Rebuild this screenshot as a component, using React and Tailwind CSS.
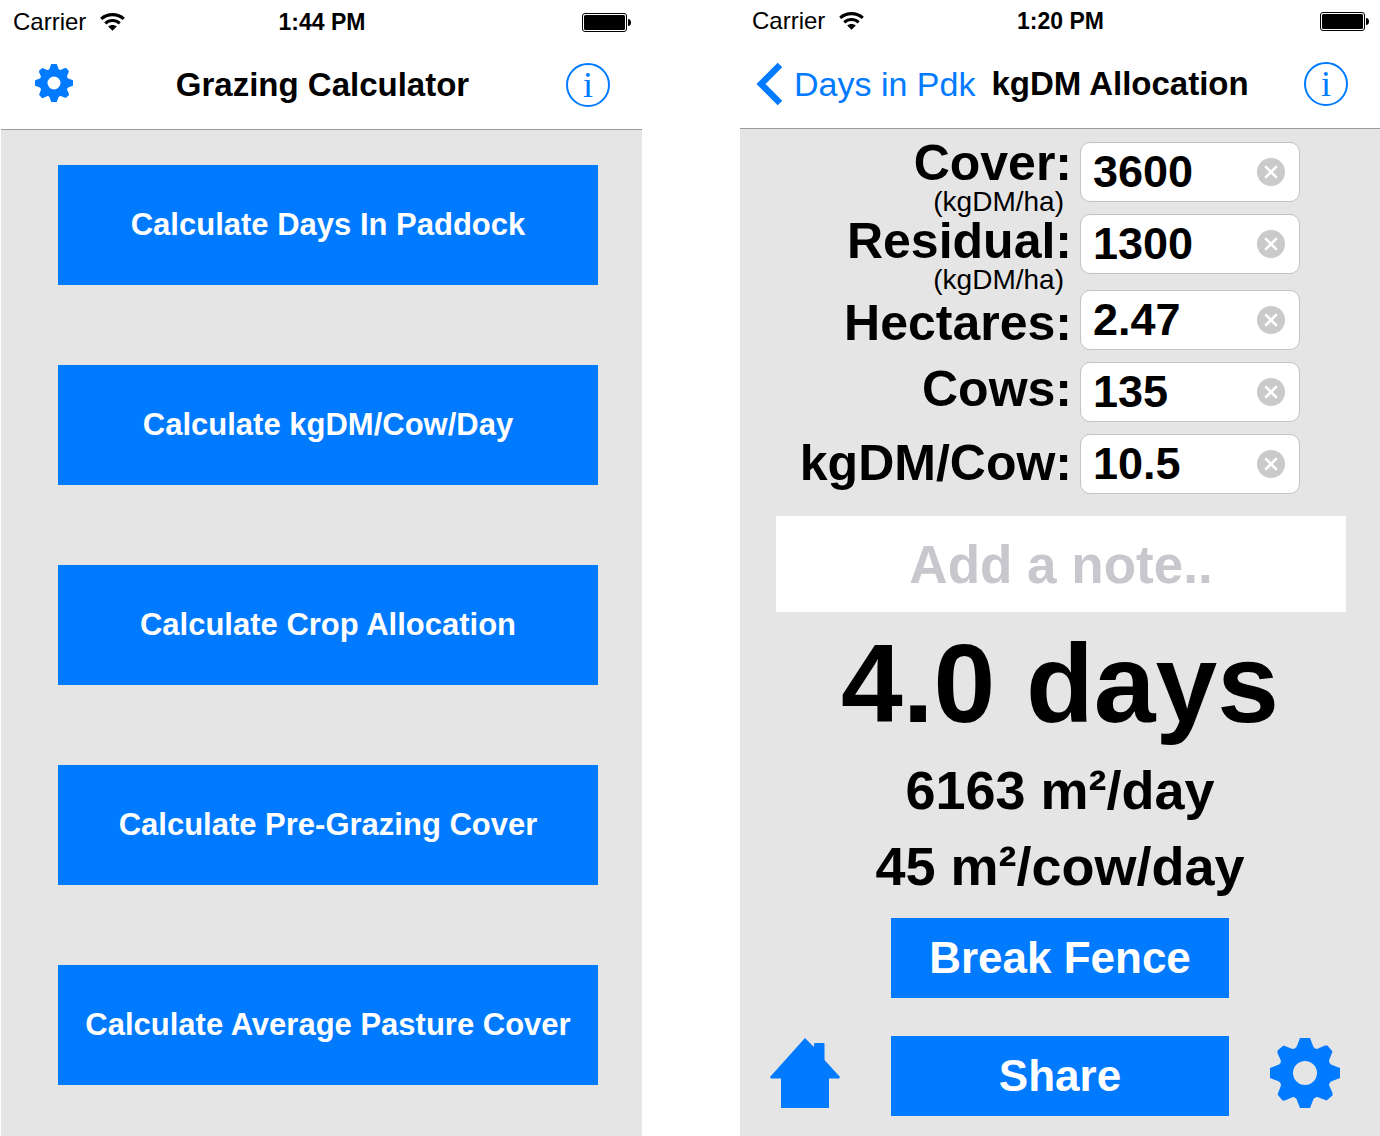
import React, { useState } from 'react';

const MENU = [
    'Calculate Days In Paddock',
    'Calculate kgDM/Cow/Day',
    'Calculate Crop Allocation',
    'Calculate Pre-Grazing Cover',
    'Calculate Average Pasture Cover',
];

const FIELDS = [
    { id: 'cover', label: 'Cover:', hint: '(kgDM/ha)', value: '3600', labelGap: '', inputGap: '' },
    { id: 'residual', label: 'Residual:', hint: '(kgDM/ha)', value: '1300', labelGap: '', inputGap: 'mt-3' },
    { id: 'hectares', label: 'Hectares:', value: '2.47', labelGap: 'mt-1', inputGap: 'mt-4' },
    { id: 'cows', label: 'Cows:', value: '135', labelGap: 'mt-4', inputGap: 'mt-3' },
    { id: 'kgdm', label: 'kgDM/Cow:', value: '10.5', labelGap: 'mt-6', inputGap: 'mt-3' },
];

function WifiIcon() {
    return (
        <svg viewBox="0 0 25 18" className="w-[25px] h-[18px]" fill="none" stroke="#000" strokeWidth="3.1">
            <path d="M1.200 5.800C7.500 0.200 17.500 0.200 23.800 5.800"/>
            <path d="M5.300 10.400C9.500 6.600 15.500 6.600 19.700 10.400"/>
            <path d="M12.500 17.800L8.200 13.500C10.700 11.500 14.300 11.500 16.800 13.500Z" fill="#000" stroke="none"/>
        </svg>
    );
}

function BatteryIcon() {
    return (
        <svg viewBox="0 0 49 19" className="w-[49px] h-[19px]">
            <rect x="0.500" y="0.500" width="44" height="18" rx="2.500" fill="none" stroke="#000"/>
            <rect x="2" y="2" width="41" height="15" rx="1.500"/>
            <path d="M46 6c2 0 3 1.500 3 3.500s-1 3.500-3 3.500z"/>
        </svg>
    );
}

function GearIcon({ className }) {
    return (
        <svg viewBox="0 0 70 70" className={className} fill="currentColor" fillRule="evenodd">
            <path d="M30 0H40L43.500 9Q45 11 47 11L55 7.500H57.500L62.500 13.500L59 22.500Q59 25 61 26.500L70 30V40L61 43.500Q59 45 59 47L62.500 55V57.500L56.500 62.500L47.500 59Q45 59 43.500 61L40 70H30L26.500 61Q25 59 23 59L15 62.500H12.500L7.500 56.500L11 47.500Q11 45 9 43.500L0 40V30L9 26.500Q11 25 11 23L7.500 15V12.500L13.500 7.500L22.500 11Q25 11 26.500 9ZM35 23a12 12 0 1 0 0 24a12 12 0 1 0 0-24Z"/>
        </svg>
    );
}

function HomeIcon({ className }) {
    return (
        <svg viewBox="0 0 70 70" className={className} fill="currentColor">
            <path d="M35 0L44 9V5.500L45 5H54L54.500 5.500V22L70 39L69 40.500H59V70H11V40.500H1L0 39Z"/>
        </svg>
    );
}

function InfoButton() {
    return (
        <button aria-label="Info" className="w-11 h-11 flex items-center justify-center rounded-full border-2 border-[#007aff] text-[#007aff] font-['Liberation_Serif',serif] text-[36px] leading-[36px]">i</button>
    );
}

function StatusBar({ time }) {
    return (
        <div className="grid grid-cols-3 items-center h-[42px] pl-3 pr-[11px] text-2xl">
            <div className="flex items-center gap-3.5">Carrier <WifiIcon/></div>
            <span className="text-center text-[23px] font-bold">{time}</span>
            <div className="justify-self-end"><BatteryIcon/></div>
        </div>
    );
}

function HomeScreen() {
    return (
        <section className="flex flex-col bg-[#e5e5e5]">
            <header className="h-[130px] pt-px bg-white border-b border-[#9b9b9b]">
                <StatusBar time="1:44 PM"/>
                <div className="grid grid-cols-[1fr_auto_1fr] items-center h-[84px] pl-[34px] pr-8">
                    <button aria-label="Settings" className="justify-self-start mb-1 text-[#007aff]"><GearIcon className="w-[38px] h-[38px]"/></button>
                    <h1 className="text-[33px] leading-10 font-bold">Grazing Calculator</h1>
                    <div className="justify-self-end"><InfoButton/></div>
                </div>
            </header>
            <nav className="flex flex-col gap-20 pt-[35px] pb-[51px] pl-[57px] pr-11">
                {MENU.map(m => (
                    <button key={m} className="h-[120px] bg-[#007aff] text-white text-[31px] leading-10 font-bold whitespace-nowrap">{m}</button>
                ))}
            </nav>
        </section>
    );
}

function AllocationScreen() {
    const [values, setValues] = useState(Object.fromEntries(FIELDS.map(f => [f.id, f.value])));
    const [note, setNote] = useState('');
    const set = (id, v) => setValues({ ...values, [id]: v });

    return (
        <section className="flex flex-col bg-[#e5e5e5]">
            <header className="h-[129px] bg-white border-b border-[#9b9b9b]">
                <StatusBar time="1:20 PM"/>
                <div className="flex items-center h-[84px] pl-4 pr-8">
                    <a href="#days" className="flex items-center gap-3 text-[34px] leading-10 text-[#007aff] whitespace-nowrap">
                        <svg viewBox="0 0 26 42" className="w-[26px] h-[42px]" fill="none" stroke="currentColor" strokeWidth="6.5">
                            <path d="M24 2L5 21L24 40"/>
                        </svg>
                        Days in Pdk
                    </a>
                    <h1 className="ml-4 text-[33px] leading-10 font-bold whitespace-nowrap">kgDM Allocation</h1>
                    <div className="ml-auto"><InfoButton/></div>
                </div>
            </header>

            <div className="grid grid-cols-[332fr_300fr] gap-2">
                <div className="flex flex-col pt-[9px] text-right">
                    {FIELDS.map(f => (
                        <div key={f.id} className={f.labelGap}>
                            <label htmlFor={f.id} className="block text-[50px] leading-[50px] font-bold">{f.label}</label>
                            {f.hint && <p className="pr-2 text-[28px] leading-7">{f.hint}</p>}
                        </div>
                    ))}
                </div>
                <div className="flex flex-col pt-[13px]">
                    {FIELDS.map(f => (
                        <div key={f.id} className={`flex items-center w-[220px] h-[60px] pl-3 pr-3.5 bg-white border border-[#c3c3c3] rounded-[10px] ${f.inputGap}`}>
                            <input id={f.id} value={values[f.id]} onChange={e => set(f.id, e.target.value)} className="flex-1 min-w-0 text-[45px] leading-[56px] font-bold outline-none"/>
                            <button aria-label="Clear" onClick={() => set(f.id, '')}>
                                <svg viewBox="0 0 28 28" className="w-7 h-7">
                                    <circle cx="14" cy="14" r="14" fill="#cacaca"/>
                                    <path d="M9 9L19 19M19 9L9 19" stroke="#fff" strokeWidth="2.500" strokeLinecap="round"/>
                                </svg>
                            </button>
                        </div>
                    ))}
                </div>
            </div>

            <input aria-label="Note" value={note} onChange={e => setNote(e.target.value)} placeholder="Add a note.." className="min-w-0 mt-[22px] ml-9 mr-[34px] h-24 bg-white text-center text-[53px] font-bold placeholder:text-[#c7c7cd] outline-none"/>

            <div className="text-center font-bold">
                <p className="mt-3 text-[111px] leading-[120px]">4.0 days</p>
                <p className="mt-2 text-[54px] leading-[76px]">6163 m²/day</p>
                <p className="text-[54px] leading-[76px]">45 m²/cow/day</p>
            </div>

            <button className="self-center mt-3.5 w-[338px] h-20 bg-[#007aff] text-white text-[44px] font-bold">Break Fence</button>
            <div className="grid grid-cols-[1fr_338px_1fr] items-start mt-[38px] mb-5">
                <button aria-label="Home" className="justify-self-start mt-0.5 ml-[30px] text-[#007aff]"><HomeIcon className="w-[70px] h-[70px]"/></button>
                <button className="h-20 bg-[#007aff] text-white text-[44px] font-bold">Share</button>
                <button aria-label="Settings" className="justify-self-end mt-0.5 mr-10 text-[#007aff]"><GearIcon className="w-[70px] h-[70px]"/></button>
            </div>
        </section>
    );
}

export default function App() {
    return (
        <main className="grid grid-cols-[minmax(0,641fr)_minmax(0,640fr)] gap-[98px] min-h-screen pl-px bg-white text-black font-['Liberation_Sans',Arial,sans-serif]">
            <HomeScreen/>
            <AllocationScreen/>
        </main>
    );
}
